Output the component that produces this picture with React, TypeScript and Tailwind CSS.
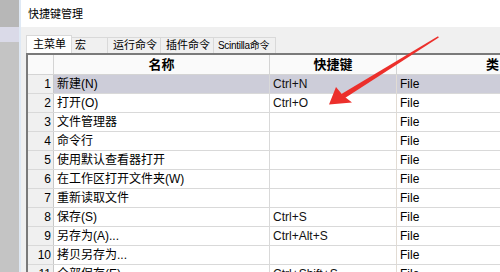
const rows = [
  { name: '新建(N)', key: 'Ctrl+N' },
  { name: '打开(O)', key: 'Ctrl+O' },
  { name: '文件管理器', key: '' },
  { name: '命令行', key: '' },
  { name: '使用默认查看器打开', key: '' },
  { name: '在工作区打开文件夹(W)', key: '' },
  { name: '重新读取文件', key: '' },
  { name: '保存(S)', key: 'Ctrl+S' },
  { name: '另存为(A)...', key: 'Ctrl+Alt+S' },
  { name: '拷贝另存为...', key: '' },
  { name: '全部保存(E)', key: 'Ctrl+Shift+S' },
];

const tabs = ['宏', '运行命令', '插件命令', 'Scintilla命令'];

export default function App() {
  return (
    <div
      className="relative flex w-[500px] h-[272px] overflow-hidden bg-[#f0f0f0] text-black"
      style={{ fontFamily: '"Liberation Sans", "Noto Sans CJK SC", sans-serif' }}
    >
      {/* window behind */}
      <div className="flex flex-col w-[19px] shrink-0">
        <div className="h-[27px] shrink-0 bg-[#b7b7b7]" />
        <div className="h-[15px] shrink-0 bg-[#dadae8]" />
        <div className="flex-1 bg-[#c4c4c4]" />
      </div>
      <div className="w-[2px] shrink-0 bg-[#dfe9f5]" />

      {/* dialog */}
      <div className="flex flex-col flex-1 min-w-0">
        <div className="h-[27px] shrink-0 bg-white pl-[7px] pt-[1px] flex items-center text-[11px]">快捷键管理</div>

        <div className="flex-1 min-h-0 overflow-hidden pl-[5px] pt-[8px]">
          {/* tabs */}
          <div className="flex items-end h-[18px] text-[11px]">
            <div className="h-[18px] w-[46px] bg-white border-t border-l border-r border-[#d9d9d9] pl-[6px] flex items-center">
              主菜单
            </div>
            {tabs.map((t, i) => (
              <div
                key={t}
                className={`h-[16px] flex items-center border-r border-t border-[#d9d9d9] ${
                  i === 0 ? 'w-[36px] pl-[3px]' : i === 3 ? 'w-[62px] pl-[4px] text-[10px] tracking-[-0.3px]' : 'w-[53px] pl-[5px]'
                }`}
              >
                {t}
              </div>
            ))}
          </div>

          {/* table */}
          <div className="border-t-2 border-l-2 border-[#7a7a7a] bg-white text-[12px]">
            <div className="grid grid-cols-[26px_216px_127px_200px] h-[20px] bg-[#fafafa] border-b border-[#d4d4d4]">
              <div className="border-r border-[#d4d4d4]" />
              <div className="border-r border-[#d4d4d4] flex items-center justify-center font-bold text-[13px] leading-none">名称</div>
              <div className="border-r border-[#d4d4d4] flex items-center justify-center font-bold text-[13px] leading-none">快捷键</div>
              <div className="flex items-center justify-start pl-[89px] font-bold text-[13px] leading-none">类</div>
            </div>
            {rows.map((r, i) => (
              <div
                key={i}
                className={`grid grid-cols-[26px_216px_127px_200px] h-[19px] border-b border-[#d9d9d9] ${
                  i === 0 ? 'bg-[#cdcdd9]' : 'bg-white'
                }`}
              >
                <div className="bg-[#f0f0f0] border-r border-[#c8c8c8] flex items-center justify-end pr-[2px]">{i + 1}</div>
                <div className="border-r border-[#d9d9d9] flex items-center pl-[3px] whitespace-nowrap">{r.name}</div>
                <div className="border-r border-[#e2dcd4] flex items-center pl-[3px] text-[#111]">{r.key}</div>
                <div className="flex items-center pl-[3px]">File</div>
              </div>
            ))}
          </div>
        </div>
      </div>

      {/* red annotation arrow */}
      <svg className="absolute left-0 top-0 pointer-events-none" width="500" height="272" viewBox="0 0 500 272">
        <polygon points="438,36.3 438.8,37.6 344.2,98.4 341.4,94" fill="#ec2f2b" />
        <polygon points="329,104.5 336,87 343,95.5 352,102.5" fill="#ec2f2b" />
      </svg>
    </div>
  );
}
